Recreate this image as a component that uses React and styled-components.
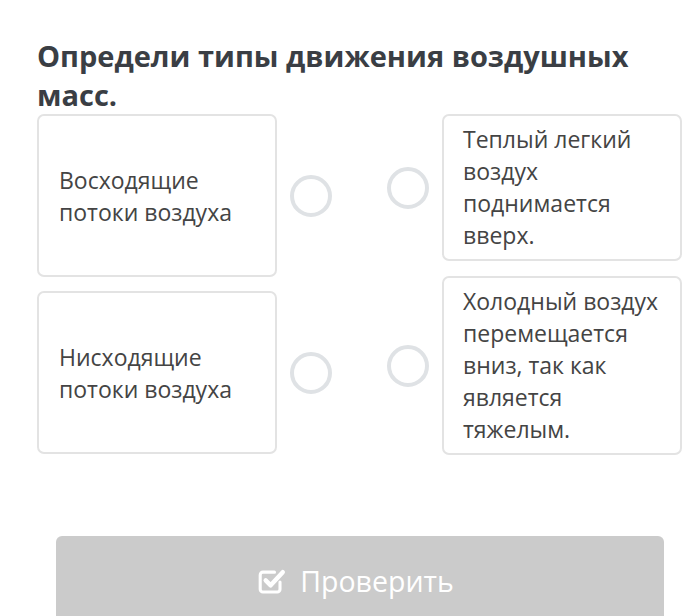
import React from 'react';
import styled, {createGlobalStyle} from 'styled-components';

const GlobalStyle = createGlobalStyle`
  body {
    margin: 0;
    background: #fff;
    font-family: "Open Sans", "Noto Sans", sans-serif;
  }
`;

const Page = styled.div`
  padding: 36px 0 0 37px;
  height: 616px;
  box-sizing: border-box;
  overflow: hidden;
`;

const Title = styled.h1`
  margin: 0;
  width: 640px;
  font-size: 29px;
  line-height: 39px;
  font-weight: 700;
  color: #3a3e44;
`;

const Board = styled.div`
  display: flex;
  align-items: flex-start;
  gap: 55px;
`;

const Column = styled.div`
  display: flex;
  flex-direction: column;
  gap: ${p => p.$gap}px;
`;

const Row = styled.div`
  display: flex;
  align-items: center;
  gap: 13px;
`;

const Card = styled.div`
  box-sizing: border-box;
  width: 240px;
  min-height: ${p => p.$fixed ? '163px' : '0'};
  display: flex;
  align-items: center;
  padding: ${p => p.$fixed ? '0 20px' : '7px 18px 8px 19px'};
  border: 2px solid #e3e3e3;
  border-radius: 7px;
  font-size: 23px;
  line-height: 32px;
  color: #444;
`;

const Dot = styled.span`
  box-sizing: border-box;
  flex: none;
  width: 42px;
  height: 42px;
  border: 4px solid #dfe2e5;
  border-radius: 50%;
`;

const CheckButton = styled.button`
  display: flex;
  align-items: center;
  justify-content: center;
  gap: 9px;
  margin: 81px 0 0 19px;
  width: 608px;
  height: 90px;
  padding: 0 8px 0 0;
  border: none;
  border-radius: 6px;
  background: #cbcbcb;
  color: #fff;
  font-family: "Open Sans", sans-serif;
  font-size: 28.5px;
`;

function CheckIcon() {
    return (
        <svg width="33" height="29" viewBox="0 0 30 26" fill="none" stroke="#fff" strokeLinecap="round" strokeLinejoin="round">
            <path d="M20 13.5 V20 a2.5 2.5 0 0 1 -2.5 2.5 H4.5 a2.5 2.5 0 0 1 -2.5 -2.5 V7 a2.5 2.5 0 0 1 2.5 -2.5 H15" strokeWidth="2.8"/>
            <path d="M7 12 L11.5 16.5 L22.5 4.5" strokeWidth="4"/>
        </svg>
    );
}

const left = ['Восходящие потоки воздуха', 'Нисходящие потоки воздуха'];
const right = ['Теплый легкий воздух поднимается вверх.', 'Холодный воздух перемещается вниз, так как является тяжелым.'];

export default function App() {
    return (
        <>
            <GlobalStyle/>
            <Page>
                <Title>Определи типы движения воздушных масс.</Title>
                <Board>
                    <Column $gap={14}>
                        {left.map(text => (
                            <Row key={text}>
                                <Card $fixed>{text}</Card>
                                <Dot/>
                            </Row>
                        ))}
                    </Column>
                    <Column $gap={15}>
                        {right.map(text => (
                            <Row key={text}>
                                <Dot/>
                                <Card>{text}</Card>
                            </Row>
                        ))}
                    </Column>
                </Board>
                <CheckButton>
                    <CheckIcon/>
                    Проверить
                </CheckButton>
            </Page>
        </>
    );
}
